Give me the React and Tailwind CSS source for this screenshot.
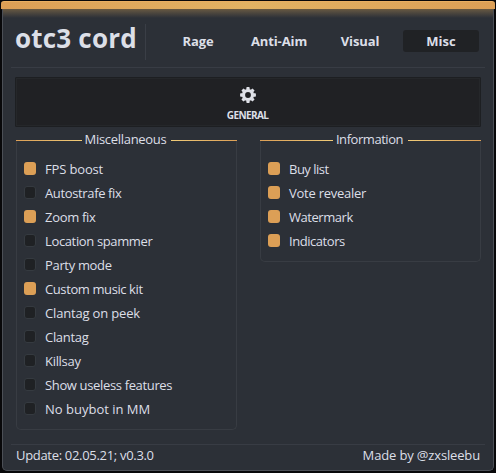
const TABS = [
  { name: 'Rage', box: 'w-[76px] tracking-[-0.1px]' },
  { name: 'Anti-Aim', box: 'w-[86px] tracking-[-0.1px]' },
  { name: 'Visual', box: 'w-[76px] tracking-[-0.1px]' },
  { name: 'Misc', box: 'ml-[5px] w-[76px] rounded-[3px] bg-[#202225]' },
];

const MISC = [
  ['FPS boost', true, 'tracking-[-0.15px]'],
  ['Autostrafe fix', false, 'tracking-[-0.36px]'],
  ['Zoom fix', true, 'tracking-[-0.3px]'],
  ['Location spammer', false, 'tracking-[-0.36px]'],
  ['Party mode', false, 'tracking-[-0.33px]'],
  ['Custom music kit', true, 'tracking-[-0.4px]'],
  ['Clantag on peek', false, 'tracking-[-0.17px]'],
  ['Clantag', false, 'tracking-[-0.3px]'],
  ['Killsay', false, 'tracking-[-0.3px]'],
  ['Show useless features', false, 'tracking-[-0.35px]'],
  ['No buybot in MM', false, 'tracking-[0px]'],
];

const INFO = [
  ['Buy list', true, 'tracking-[-0.5px]'],
  ['Vote revealer', true, 'tracking-[-0.25px]'],
  ['Watermark', true, 'tracking-[-0.45px]'],
  ['Indicators', true, 'tracking-[-0.45px]'],
];

const TEETH = [0, 45, 90, 135, 180, 225, 270, 315];

function Gear() {
  return (
    <svg viewBox="-8 -8 16 16" className="mr-px h-4 w-4">
      <circle r="4.5" fill="none" stroke="#dfe1e8" strokeWidth="3.2" />
      {TEETH.map((a) => (
        <path key={a} d="M-1.9 -5.3L-1.4 -7.9H1.4L1.9 -5.3Z" fill="#dfe1e8" transform={`rotate(${a})`} />
      ))}
    </svg>
  );
}

function Group({ title, track, items, height }) {
  return (
    <section className={`flex w-[221px] flex-col ${height}`}>
      <div className="z-10 -mb-[9px] flex h-[18px] shrink-0 items-start">
        <span className="mt-[9px] h-px flex-1 bg-linear-to-r from-[#dc9f56] to-[#f0cb78]" />
        <h2 className={`pr-[5px] pl-[3px] text-[13px] leading-[16px] whitespace-nowrap ${track}`}>{title}</h2>
        <span className="mt-[9px] h-px flex-1 bg-linear-to-r from-[#f0cb78] to-[#dc9f56]" />
      </div>
      <ul className="flex-1 rounded-b-[5px] border border-t-0 border-[#383c43] pt-[17px] pl-[7px]">
        {items.map(([label, on, tracking]) => (
          <li key={label} className="flex h-6 items-start gap-[9px]">
            <span
              className={
                on
                  ? 'mt-[5px] h-[13px] w-3 rounded-[3px] bg-[#dc9f56]'
                  : 'mt-[5px] h-[13px] w-3 rounded-[3px] border border-[#353a40] bg-[#1f2124]'
              }
            />
            <span className={`text-[13px] leading-6 ${tracking}`}>{label}</span>
          </li>
        ))}
      </ul>
    </section>
  );
}

export default function App() {
  return (
    <div className="h-[473px] w-[496px] overflow-hidden bg-[#08080a] px-px pt-px font-['Open_Sans','Noto_Sans',sans-serif] text-[#dcdfe7]">
      <div className="h-2 rounded-t-[3px] border-t border-[#e9af62] bg-linear-to-r from-[#dc9f56] via-[#e2b263] to-[#dc9f56]" />
      <main className="mx-px flex h-[462px] flex-col rounded-b-[5px] border border-t-0 border-[#4b4f56] bg-[#2c3037]">
        <header className="flex h-[58px] shrink-0 items-start bg-linear-to-b from-[#685942] to-[#2c3037] bg-[length:100%_9px] bg-no-repeat">
          <h1 className="mt-[11px] ml-3 w-[130px] text-[26px] leading-[36px] font-bold tracking-[0.2px] whitespace-nowrap">
            otc3 cord
          </h1>
          <span className="mt-[15px] h-9 w-px bg-[#3a3e46]" />
          <nav className="mt-[21px] ml-[14px] flex text-[13px] leading-[23px] font-bold">
            {TABS.map((t) => (
              <span key={t.name} className={`h-[22px] text-center ${t.box}`}>
                {t.name}
              </span>
            ))}
          </nav>
        </header>
        <div className="mx-2 h-px shrink-0 bg-[#383c44]" />
        <div className="mt-[9px] ml-3 flex h-[50px] w-[466px] shrink-0 flex-col items-center rounded-[1px] border border-[#1d1f22] bg-[#202124] pt-[9px] shadow-[inset_0_0_0_1px_#25272a]">
          <Gear />
          <span className="mt-[6px] mr-px text-[10px] leading-3 font-bold tracking-[-0.6px]">GENERAL</span>
        </div>
        <div className="mt-1 ml-[13px] flex gap-[23px]">
          <Group title="Miscellaneous" track="tracking-[-0.3px]" items={MISC} height="h-[299px]" />
          <Group title="Information" track="tracking-[-0.45px]" items={INFO} height="h-[131px]" />
        </div>
        <footer className="mx-2 mt-[14px] flex h-[26px] justify-between border-t border-[#383c44] px-[5px] text-[13px] leading-[21px]">
          <span className="tracking-[-0.31px]">Update: 02.05.21; v0.3.0</span>
          <span className="tracking-[-0.15px]">Made by @zxsleebu</span>
        </footer>
      </main>
    </div>
  );
}
